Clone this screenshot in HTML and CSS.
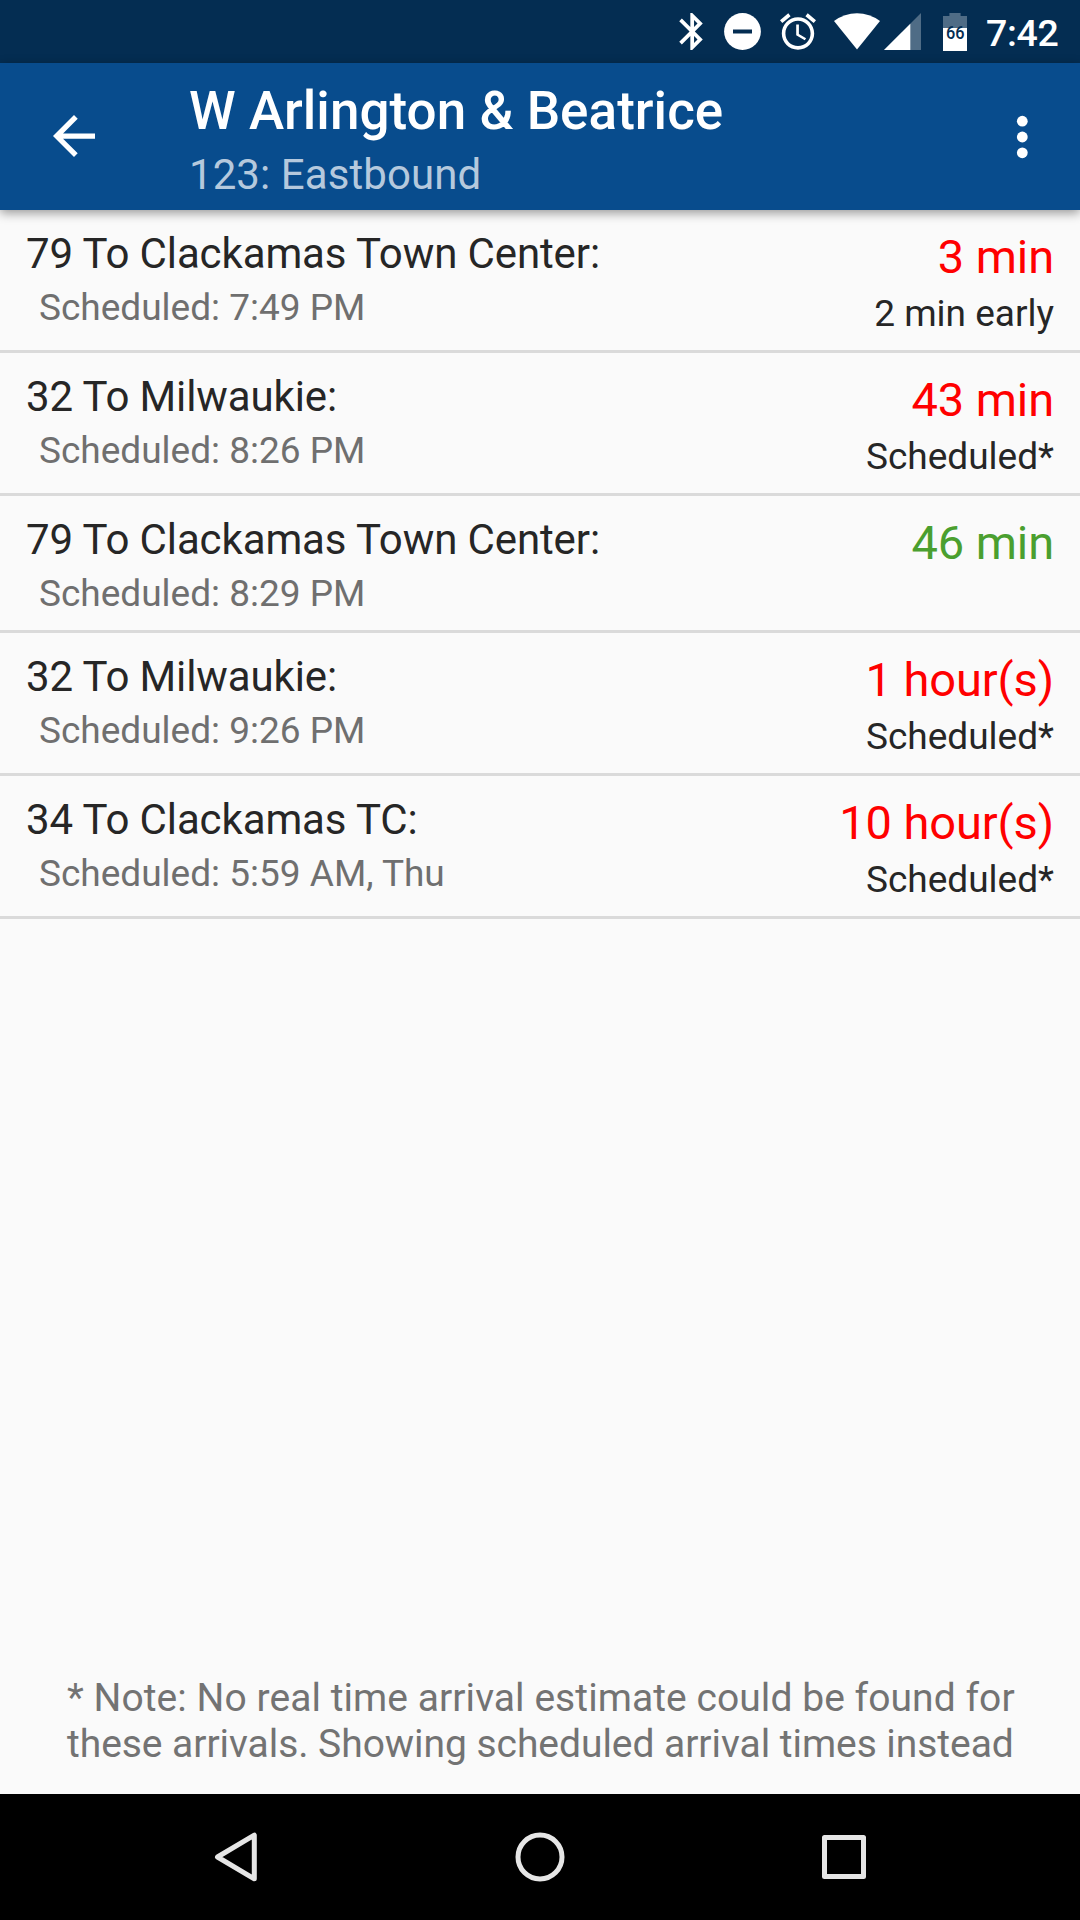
FILE: index.html
```html
<!DOCTYPE html>
<html lang="en">
<head>
<meta charset="utf-8">
<title>W Arlington &amp; Beatrice</title>
<link rel="stylesheet" href="styles.css">
</head>
<body>
<div class="screen">
  <div class="status-bar">
    <svg class="bluetooth" width="24" height="37" viewBox="5 2 12.71 20"><path fill="#fff" d="M17.71 7.71L12 2h-1v7.59L6.41 5 5 6.41 10.59 12 5 17.59 6.41 19 11 14.41V22h1l5.71-5.71-4.3-4.29 4.3-4.29zM13 5.83l1.88 1.88L13 9.59V5.83zm1.88 10.46L13 18.17v-3.76l1.88 1.88z"/></svg>
    <svg class="dnd" width="37" height="37" viewBox="0 0 37 37"><circle cx="18.5" cy="18.5" r="18.4" fill="#fff"/><path fill="#042d52" d="M9 16.5h19v4H9z"/></svg>
    <svg class="alarm" width="36" height="37" viewBox="2 1.86 20 20.14"><path fill="#fff" d="M22 5.72l-4.6-3.86-1.29 1.53 4.6 3.86L22 5.72zM7.88 3.39L6.6 1.86 2 5.71l1.29 1.53 4.59-3.85zM12.5 8H11v6l4.75 2.85.75-1.23-4-2.37V8zM12 4c-4.97 0-9 4.03-9 9s4.02 9 9 9c4.97 0 9-4.03 9-9s-4.03-9-9-9zm0 16c-3.87 0-7-3.13-7-7s3.13-7 7-7 7 3.13 7 7-3.13 7-7 7z"/></svg>
    <svg class="wifi" width="46" height="37" viewBox="0 0 46 37"><path fill="#fff" d="M0 8Q10.500 .2 23 .2T46 8L23 36.500z"/></svg>
    <svg class="signal" width="37" height="37" viewBox="0 0 37 37"><path fill="#fff" fill-opacity=".3" d="M37 0v37H0z"/><path fill="#fff" d="M26.300 10.700V37H0z"/></svg>
    <svg class="battery" width="24" height="38" viewBox="0 0 24 38"><path fill="#fff" fill-opacity=".3" d="M6.400 0h11.200v3H24v12H0V3h6.400z"/><path fill="#fff" d="M0 15h24v23H0z"/><text class="battery-level" x="3" y="26" textLength="18.500" lengthAdjust="spacingAndGlyphs">66</text></svg>
    <span class="clock">7:42</span>
  </div>
  <header class="app-bar">
    <svg class="back" width="42" height="42" viewBox="4 4 16 16"><path fill="#fff" d="M20 11H7.830l5.590-5.590L12 4l-8 8 8 8 1.410-1.410L7.830 13H20v-2z"/></svg>
    <div class="heading">
      <h1 class="title">W Arlington &amp; Beatrice</h1>
      <p class="subtitle">123: Eastbound</p>
    </div>
    <svg class="overflow" width="12" height="44" viewBox="0 0 12 44"><g fill="#fff"><circle cx="6.300" cy="6.200" r="5.400"/><circle cx="6.300" cy="22" r="5.400"/><circle cx="6.300" cy="37.800" r="5.400"/></g></svg>
  </header>
  <main class="arrivals">
    <section class="arrival">
      <div><p class="route">79 To Clackamas Town Center:</p><p class="scheduled">Scheduled: 7:49 PM</p></div>
      <div class="estimate"><p class="eta late">3 min</p><p class="status">2 min early</p></div>
    </section>
    <section class="arrival">
      <div><p class="route">32 To Milwaukie:</p><p class="scheduled">Scheduled: 8:26 PM</p></div>
      <div class="estimate"><p class="eta late">43 min</p><p class="status">Scheduled*</p></div>
    </section>
    <section class="arrival">
      <div><p class="route">79 To Clackamas Town Center:</p><p class="scheduled">Scheduled: 8:29 PM</p></div>
      <div class="estimate"><p class="eta on-time">46 min</p></div>
    </section>
    <section class="arrival">
      <div><p class="route">32 To Milwaukie:</p><p class="scheduled">Scheduled: 9:26 PM</p></div>
      <div class="estimate"><p class="eta late">1 hour(s)</p><p class="status">Scheduled*</p></div>
    </section>
    <section class="arrival">
      <div><p class="route">34 To Clackamas TC:</p><p class="scheduled">Scheduled: 5:59 AM, Thu</p></div>
      <div class="estimate"><p class="eta late">10 hour(s)</p><p class="status">Scheduled*</p></div>
    </section>
  </main>
  <p class="note"><span class="note-lead">* Note: No real time arrival estimate could be found for</span><br>these arrivals. Showing scheduled arrival times instead</p>
  <nav class="nav-bar">
    <svg width="50" height="50" viewBox="0 0 50 50"><path d="M6.500 25L43.300 3.200v43.600z"/></svg>
    <svg width="50" height="50" viewBox="0 0 50 50"><circle cx="25" cy="25" r="22"/></svg>
    <svg width="50" height="50" viewBox="0 0 50 50"><path d="M5.500 5.500h39v39h-39z"/></svg>
  </nav>
</div>
</body>
</html>
```
FILE: styles.css
```css
* { box-sizing: border-box; }

body, h1, p { margin: 0; }

body { font-family: Roboto, sans-serif; }

svg { display: block; flex: none; }

.screen {
  display: flex;
  flex-direction: column;
  width: 1080px;
  height: 1920px;
  overflow: hidden;
  background: #fafafa;
  color: #262626;
}

.status-bar {
  display: flex;
  align-items: center;
  justify-content: flex-end;
  height: 63px;
  padding-right: 21px;
  background: #042d52;
}

.dnd { margin-left: 20.5px; }
.alarm { margin-left: 19.5px; }
.wifi { margin-left: 18px; }
.signal { margin-left: 4px; }
.battery { margin-left: 22px; }

.battery-level {
  font-size: 19px;
  font-weight: 500;
  fill: #042d52;
}

.clock {
  width: 73px;
  margin-left: 19px;
  padding-top: 2px;
  color: #fff;
  font-size: 37.5px;
  font-weight: 500;
  line-height: 44px;
  letter-spacing: -.3px;
  white-space: nowrap;
}

.app-bar {
  position: relative;
  display: flex;
  align-items: center;
  height: 147px;
  padding: 0 52px 0 53px;
  background: #084c8d;
  box-shadow: 0 3px 10px rgba(0, 0, 0, .4);
}

.back { margin-bottom: 1px; }

.heading {
  flex: 1;
  margin-left: 94px;
  padding-top: 6px;
}

.title {
  color: #fff;
  font-size: 53px;
  font-weight: 500;
  line-height: 62px;
  letter-spacing: .03px;
}

.subtitle {
  color: #b5c9dd;
  font-size: 42px;
  line-height: 50px;
  letter-spacing: .08px;
  margin-top: 8px;
}

.arrival {
  display: flex;
  justify-content: space-between;
  padding: 19px 26px 15px;
  border-bottom: 3px solid #dadada;
}

.route {
  font-size: 42px;
  line-height: 50px;
  letter-spacing: -.11px;
}

.scheduled {
  margin: 8px 0 0 13px;
  color: #6f6f6f;
  font-size: 37px;
  line-height: 42px;
}

.estimate { text-align: right; }

.eta {
  font-size: 47px;
  line-height: 56px;
  letter-spacing: -.1px;
}

.late { color: #f00; }
.on-time { color: #4a9f2f; }

.status {
  margin-top: 8px;
  font-size: 37px;
  line-height: 42px;
}

.note {
  margin: auto auto 27px 67px;
  color: #737373;
  font-size: 39px;
  line-height: 46px;
  letter-spacing: -.05px;
  white-space: nowrap;
}

.note-lead { letter-spacing: .06px; }

.nav-bar {
  display: flex;
  align-items: center;
  justify-content: center;
  gap: 254px;
  height: 126px;
  background: #000;
}

.nav-bar svg {
  fill: none;
  stroke: #e6e6e6;
  stroke-width: 5;
  stroke-linejoin: round;
}
```
